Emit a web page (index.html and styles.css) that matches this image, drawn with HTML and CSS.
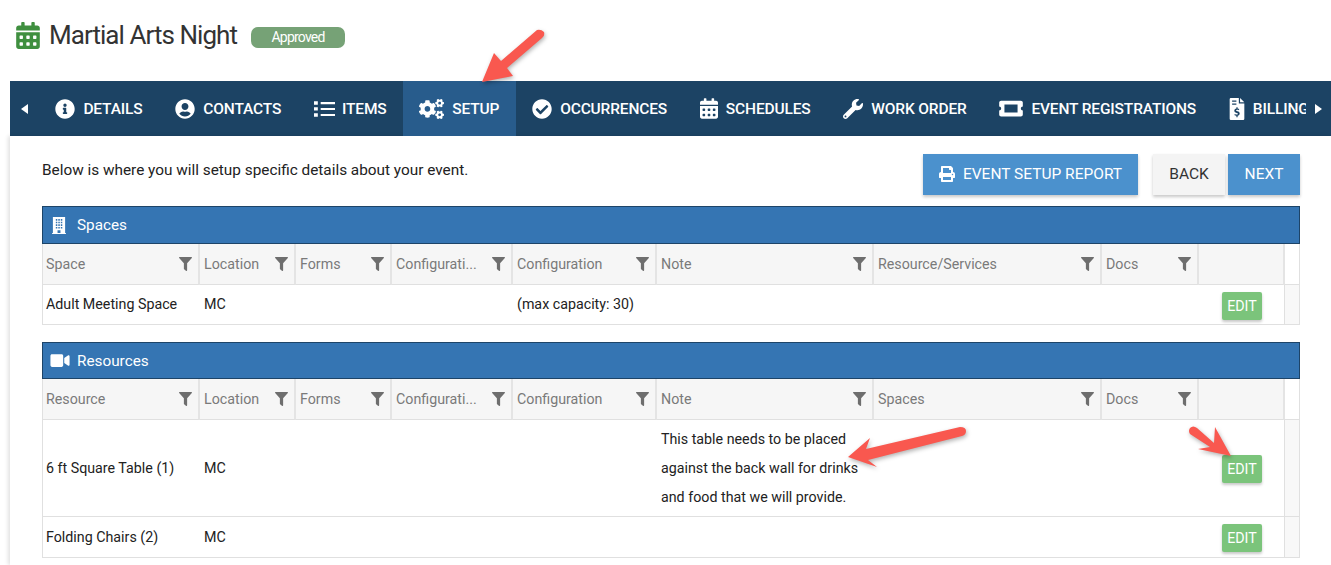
FILE: index.html
```html
<!DOCTYPE html>
<html lang="en">
<head>
<meta charset="utf-8">
<title>Martial Arts Night</title>
<link rel="stylesheet" href="styles.css">
</head>
<body>
<svg width="0" height="0" class="defs">
  <symbol id="i-filter" viewBox="0 0 512 512" preserveAspectRatio="none"><path d="M487.976 0H24.028C2.710 0-8.047 25.866 7.058 40.971L192 225.941V432c0 7.831 3.821 15.170 10.237 19.662l80 55.980C298.020 518.690 320 507.493 320 487.980V225.941l184.947-184.970C520.021 25.896 509.338 0 487.976 0z"/></symbol>
  <symbol id="i-cal" viewBox="0 0 448 512"><path d="M0 464c0 26.500 21.500 48 48 48h352c26.500 0 48-21.500 48-48V192H0v272zm320-196c0-6.600 5.400-12 12-12h40c6.600 0 12 5.400 12 12v40c0 6.600-5.400 12-12 12h-40c-6.600 0-12-5.400-12-12v-40zm0 128c0-6.600 5.400-12 12-12h40c6.600 0 12 5.400 12 12v40c0 6.600-5.400 12-12 12h-40c-6.600 0-12-5.400-12-12v-40zM192 268c0-6.600 5.400-12 12-12h40c6.600 0 12 5.400 12 12v40c0 6.600-5.400 12-12 12h-40c-6.600 0-12-5.400-12-12v-40zm0 128c0-6.600 5.400-12 12-12h40c6.600 0 12 5.400 12 12v40c0 6.600-5.400 12-12 12h-40c-6.600 0-12-5.400-12-12v-40zM64 268c0-6.600 5.400-12 12-12h40c6.600 0 12 5.400 12 12v40c0 6.600-5.400 12-12 12H76c-6.600 0-12-5.400-12-12v-40zm0 128c0-6.600 5.400-12 12-12h40c6.600 0 12 5.400 12 12v40c0 6.600-5.400 12-12 12H76c-6.600 0-12-5.400-12-12v-40zM400 64h-48V16c0-8.800-7.200-16-16-16h-32c-8.800 0-16 7.200-16 16v48H160V16c0-8.800-7.200-16-16-16h-32c-8.800 0-16 7.200-16 16v48H48C21.500 64 0 85.500 0 112v48h448v-48c0-26.500-21.500-48-48-48z"/></symbol>
</svg>

<header class="page-head">
  <svg class="title-icon"><use href="#i-cal"/></svg>
  <h1 class="title">Martial Arts Night</h1>
  <span class="badge">Approved</span>
</header>

<nav class="tabbar">
  <span class="scroll-arrow"><i class="tri tri-left"></i></span>
  <div class="tabs">
    <a class="tab">
      <svg class="tab-icon" viewBox="0 0 512 512"><path d="M256 8C119.043 8 8 119.083 8 256c0 136.997 111.043 248 248 248s248-111.003 248-248C504 119.083 392.957 8 256 8zm0 110c23.196 0 42 18.804 42 42s-18.804 42-42 42-42-18.804-42-42 18.804-42 42-42zm56 254c0 6.627-5.373 12-12 12h-88c-6.627 0-12-5.373-12-12v-24c0-6.627 5.373-12 12-12h12v-64h-12c-6.627 0-12-5.373-12-12v-24c0-6.627 5.373-12 12-12h64c6.627 0 12 5.373 12 12v100h12c6.627 0 12 5.373 12 12v24z"/></svg>
      DETAILS</a>
    <a class="tab">
      <svg class="tab-icon" viewBox="0 0 496 512"><path d="M248 8C111 8 0 119 0 256s111 248 248 248 248-111 248-248S385 8 248 8zm0 96c48.600 0 88 39.400 88 88s-39.400 88-88 88-88-39.400-88-88 39.400-88 88-88zm0 344c-58.700 0-111.300-26.600-146.500-68.200 18.800-35.400 55.600-59.800 98.500-59.800 2.400 0 4.800.4 7.100 1.100 13 4.200 26.600 6.900 40.900 6.900 14.300 0 28-2.700 40.900-6.900 2.300-.7 4.700-1.100 7.100-1.100 42.900 0 79.700 24.400 98.500 59.800C359.300 421.400 306.700 448 248 448z"/></svg>
      CONTACTS</a>
    <a class="tab">
      <svg class="tab-icon tab-icon-list" viewBox="0 0 22 18"><path d="M0 1h4v3.500H0zM0 7.200h4v3.500H0zM0 13.500h4V17H0zM7 1.700h15v2.200H7zM7 7.900h15v2.200H7zM7 14.200h15v2.200H7z"/></svg>
      ITEMS</a>
    <a class="tab tab-active">
      <svg class="tab-icon tab-icon-cogs" viewBox="0 0 640 512"><path d="M512.100 191l-8.200 14.300c-3 5.300-9.400 7.500-15.100 5.400-11.800-4.400-22.600-10.700-32.100-18.600-4.600-3.800-5.800-10.500-2.800-15.700l8.200-14.300c-6.900-8-12.300-17.300-15.900-27.400h-16.500c-6 0-11.200-4.300-12.200-10.300-2-12-2.100-24.600 0-37.100 1-6 6.200-10.400 12.200-10.400h16.500c3.600-10.100 9-19.400 15.900-27.400l-8.200-14.300c-3-5.200-1.900-11.900 2.800-15.700 9.500-7.900 20.400-14.200 32.100-18.600 5.700-2.100 12.100.1 15.100 5.400l8.200 14.300c10.500-1.900 21.200-1.900 31.700 0L552 6.300c3-5.300 9.400-7.500 15.100-5.400 11.800 4.400 22.600 10.700 32.100 18.600 4.600 3.800 5.800 10.500 2.800 15.700l-8.200 14.300c6.900 8 12.300 17.300 15.900 27.400h16.500c6 0 11.200 4.300 12.200 10.300 2 12 2.100 24.600 0 37.100-1 6-6.200 10.400-12.200 10.400h-16.500c-3.600 10.100-9 19.400-15.900 27.400l8.200 14.300c3 5.200 1.900 11.900-2.800 15.700-9.500 7.900-20.400 14.200-32.100 18.600-5.700 2.100-12.100-.1-15.100-5.400l-8.200-14.300c-10.400 1.900-21.200 1.900-31.700 0zm-10.500-58.800c38.500 29.600 82.400-14.300 52.800-52.800-38.500-29.700-82.400 14.300-52.800 52.800zM386.300 286.100l33.700 16.800c10.100 5.800 14.500 18.100 10.500 29.100-8.900 24.200-26.400 46.400-42.600 65.800-7.400 8.900-20.200 11.100-30.300 5.300l-29.100-16.800c-16 13.700-34.600 24.600-54.900 31.700v33.600c0 11.600-8.300 21.600-19.700 23.600-24.600 4.200-50.400 4.400-75.900 0-11.500-2-20-11.900-20-23.600V418c-20.300-7.200-38.900-18-54.900-31.700L74 403c-10 5.800-22.900 3.600-30.300-5.300-16.200-19.400-33.300-41.600-42.200-65.700-4-10.900.4-23.200 10.500-29.100l33.300-16.800c-3.900-20.900-3.900-42.400 0-63.400L12 205.800c-10.100-5.800-14.600-18.100-10.500-29 8.900-24.200 26-46.400 42.200-65.800 7.400-8.900 20.200-11.100 30.300-5.300l29.100 16.800c16-13.700 34.600-24.600 54.900-31.700V57.100c0-11.500 8.200-21.500 19.600-23.500 24.600-4.200 50.500-4.400 76-.1 11.500 2 20 11.900 20 23.600v33.600c20.300 7.200 38.900 18 54.900 31.700l29.100-16.800c10-5.800 22.900-3.600 30.300 5.300 16.200 19.400 33.200 41.600 42.100 65.800 4 10.900.1 23.200-10 29.100l-33.700 16.800c3.900 21 3.900 42.500 0 63.500zm-117.600 21.100c59.200-77-28.700-164.900-105.700-105.700-59.200 77 28.700 164.900 105.700 105.700zm243.400 182.700l-8.200 14.300c-3 5.300-9.400 7.500-15.100 5.400-11.800-4.400-22.600-10.700-32.100-18.600-4.600-3.800-5.800-10.500-2.800-15.700l8.200-14.300c-6.900-8-12.300-17.300-15.900-27.400h-16.500c-6 0-11.200-4.300-12.200-10.300-2-12-2.100-24.600 0-37.100 1-6 6.200-10.400 12.200-10.400h16.500c3.600-10.100 9-19.400 15.900-27.400l-8.200-14.300c-3-5.200-1.900-11.900 2.800-15.700 9.500-7.900 20.400-14.200 32.100-18.600 5.700-2.100 12.100.1 15.100 5.400l8.200 14.300c10.500-1.900 21.200-1.900 31.700 0l8.200-14.300c3-5.300 9.400-7.500 15.100-5.400 11.800 4.400 22.600 10.700 32.100 18.600 4.600 3.800 5.800 10.500 2.800 15.700l-8.200 14.300c6.900 8 12.300 17.300 15.900 27.400h16.500c6 0 11.200 4.300 12.200 10.300 2 12 2.100 24.600 0 37.100-1 6-6.200 10.400-12.200 10.400h-16.500c-3.600 10.100-9 19.400-15.900 27.400l8.200 14.300c3 5.200 1.900 11.900-2.800 15.700-9.500 7.900-20.400 14.200-32.100 18.600-5.700 2.100-12.100-.1-15.100-5.400l-8.200-14.300c-10.400 1.900-21.200 1.900-31.700 0zM501.600 431c38.500 29.600 82.400-14.300 52.800-52.800-38.500-29.600-82.400 14.300-52.800 52.800z"/></svg>
      SETUP</a>
    <a class="tab">
      <svg class="tab-icon" viewBox="0 0 512 512"><path d="M504 256c0 136.967-111.033 248-248 248S8 392.967 8 256 119.033 8 256 8s248 111.033 248 248zM227.314 387.314l184-184c6.248-6.248 6.248-16.379 0-22.627l-22.627-22.627c-6.248-6.249-16.379-6.249-22.628 0L216 308.118l-70.059-70.059c-6.248-6.248-16.379-6.248-22.628 0l-22.627 22.627c-6.248 6.248-6.248 16.379 0 22.627l104 104c6.249 6.249 16.379 6.249 22.628.001z"/></svg>
      OCCURRENCES</a>
    <a class="tab">
      <svg class="tab-icon tab-icon-cal"><use href="#i-cal"/></svg>
      SCHEDULES</a>
    <a class="tab">
      <svg class="tab-icon" viewBox="0 0 512 512"><path d="M507.730 109.100c-2.240-9.030-13.540-12.090-20.120-5.510l-74.360 74.360-67.880-11.310-11.310-67.880 74.360-74.360c6.620-6.620 3.430-17.900-5.660-20.160-47.380-11.740-99.550.910-136.580 37.930-39.640 39.640-50.550 97.100-34.050 147.200L18.740 402.760c-24.990 24.990-24.990 65.510 0 90.500 24.990 24.990 65.510 24.990 90.500 0l213.210-213.210c50.120 16.710 107.470 5.680 147.370-34.220 37.070-37.070 49.700-89.320 37.910-136.730zM64 472c-13.250 0-24-10.750-24-24 0-13.260 10.750-24 24-24s24 10.740 24 24c0 13.250-10.750 24-24 24z"/></svg>
      WORK ORDER</a>
    <a class="tab">
      <svg class="tab-icon tab-icon-ticket" viewBox="0 0 576 512"><path fill-rule="evenodd" d="M528 256c0 26.510 21.490 48 48 48v96c0 26.510-21.490 48-48 48H48c-26.510 0-48-21.490-48-48v-96c26.510 0 48-21.490 48-48s-21.490-48-48-48v-96c0-26.510 21.490-48 48-48h480c26.510 0 48 21.490 48 48v96c-26.510 0-48 21.490-48 48zM128 160v192h320V160z"/></svg>
      EVENT REGISTRATIONS</a>
    <a class="tab">
      <svg class="tab-icon tab-icon-file" viewBox="0 0 12 18"><path fill-rule="evenodd" d="M1 0h6.500v4.500H12V17a1 1 0 0 1-1 1H1a1 1 0 0 1-1-1V1a1 1 0 0 1 1-1zm7.500 0L12 3.500H8.500zM2 2v1h3.500V2zm0 2.500v1h3.500v-1zM6.500 7.500h-1v1.100c-1 .2-1.700.9-1.700 1.800 0 1 .8 1.500 1.900 1.800.9.200 1.100.4 1.100.7 0 .4-.4.600-.9.600-.6 0-1.200-.2-1.600-.5l-.5 1c.4.300 1 .5 1.700.6V15.700h1v-1.200c1-.2 1.700-.9 1.700-1.900 0-1-.7-1.500-1.900-1.800-.9-.2-1.100-.4-1.100-.6 0-.3.300-.5.800-.5s1 .1 1.400.4l.5-1c-.4-.3-.9-.4-1.400-.5z"/></svg>
      BILLING</a>
  </div>
  <span class="scroll-arrow scroll-arrow-right"><i class="tri tri-right"></i></span>
</nav>

<main class="content">
  <div class="toolbar">
    <p class="intro">Below is where you will setup specific details about your event.</p>
    <div class="actions">
      <button class="btn btn-blue btn-report">
        <svg class="btn-icon" viewBox="0 0 512 512"><path d="M448 192V77.250c0-8.490-3.370-16.620-9.370-22.630L393.370 9.370c-6-6-14.140-9.370-22.630-9.370H96C78.330 0 64 14.330 64 32v160c-35.350 0-64 28.650-64 64v112c0 8.840 7.160 16 16 16h48v96c0 17.670 14.330 32 32 32h320c17.670 0 32-14.330 32-32v-96h48c8.840 0 16-7.160 16-16V256c0-35.350-28.650-64-64-64zm-64 256H128v-96h256v96zm0-224H128V64h192v48c0 8.840 7.160 16 16 16h48v96zm48 72c-13.250 0-24-10.750-24-24 0-13.270 10.750-24 24-24s24 10.730 24 24c0 13.250-10.750 24-24 24z"/></svg>
        EVENT SETUP REPORT</button>
      <button class="btn btn-grey">BACK</button>
      <button class="btn btn-blue btn-next">NEXT</button>
    </div>
  </div>

  <section class="panel panel-spaces">
    <h2 class="panel-title">
      <svg class="panel-icon panel-icon-building" viewBox="0 0 448 512"><path fill-rule="evenodd" d="M40 0h368v480h24v32H16v-32h24zM128 60v50h45V60zm75 0v50h45V60zm75 0v50h45V60zM128 140v50h45v-50zm75 0v50h45v-50zm75 0v50h45v-50zM128 220v50h45v-50zm75 0v50h45v-50zm75 0v50h45v-50zM128 300v50h45v-50zm75 0v50h45v-50zm75 0v50h45v-50zM180 400v80h88v-80z"/></svg>
      Spaces</h2>
    <div class="grid head">
      <div class="hc">Space<svg class="filter"><use href="#i-filter"/></svg></div>
      <div class="hc">Location<svg class="filter"><use href="#i-filter"/></svg></div>
      <div class="hc">Forms<svg class="filter"><use href="#i-filter"/></svg></div>
      <div class="hc">Configurati...<svg class="filter"><use href="#i-filter"/></svg></div>
      <div class="hc">Configuration<svg class="filter"><use href="#i-filter"/></svg></div>
      <div class="hc">Note<svg class="filter"><use href="#i-filter"/></svg></div>
      <div class="hc">Resource/Services<svg class="filter"><use href="#i-filter"/></svg></div>
      <div class="hc">Docs<svg class="filter"><use href="#i-filter"/></svg></div>
      <div class="hc"></div>
      <div class="hc-end"></div>
    </div>
    <div class="grid row row-first">
      <div class="c">Adult Meeting Space</div>
      <div class="c">MC</div>
      <div class="c"></div>
      <div class="c"></div>
      <div class="c">(max capacity: 30)</div>
      <div class="c"></div>
      <div class="c"></div>
      <div class="c"></div>
      <div class="c-action"><button class="edit">EDIT</button></div>
      <div class="c-end"></div>
    </div>
  </section>

  <section class="panel">
    <h2 class="panel-title panel-title-short">
      <svg class="panel-icon panel-icon-video" viewBox="0 0 576 512"><path d="M336.200 64H47.800C21.400 64 0 85.400 0 111.800v288.400C0 426.600 21.400 448 47.800 448h288.400c26.400 0 47.800-21.400 47.800-47.800V111.800c0-26.400-21.400-47.800-47.800-47.800zm189.400 37.700L416 177.300v157.400l109.600 75.500c21.200 14.600 50.400-.3 50.400-25.800V127.500c0-25.400-29.100-40.400-50.400-25.800z"/></svg>
      Resources</h2>
    <div class="grid head">
      <div class="hc">Resource<svg class="filter"><use href="#i-filter"/></svg></div>
      <div class="hc">Location<svg class="filter"><use href="#i-filter"/></svg></div>
      <div class="hc">Forms<svg class="filter"><use href="#i-filter"/></svg></div>
      <div class="hc">Configurati...<svg class="filter"><use href="#i-filter"/></svg></div>
      <div class="hc">Configuration<svg class="filter"><use href="#i-filter"/></svg></div>
      <div class="hc">Note<svg class="filter"><use href="#i-filter"/></svg></div>
      <div class="hc">Spaces<svg class="filter"><use href="#i-filter"/></svg></div>
      <div class="hc">Docs<svg class="filter"><use href="#i-filter"/></svg></div>
      <div class="hc"></div>
      <div class="hc-end"></div>
    </div>
    <div class="grid row row-tall">
      <div class="c">6 ft Square Table (1)</div>
      <div class="c">MC</div>
      <div class="c"></div>
      <div class="c"></div>
      <div class="c"></div>
      <div class="c c-note">This table needs to be placed against the back wall for drinks and food that we will provide.</div>
      <div class="c"></div>
      <div class="c"></div>
      <div class="c-action"><button class="edit">EDIT</button></div>
      <div class="c-end"></div>
    </div>
    <div class="grid row row-last">
      <div class="c">Folding Chairs (2)</div>
      <div class="c">MC</div>
      <div class="c"></div>
      <div class="c"></div>
      <div class="c"></div>
      <div class="c"></div>
      <div class="c"></div>
      <div class="c"></div>
      <div class="c-action"><button class="edit">EDIT</button></div>
      <div class="c-end"></div>
    </div>
  </section>
</main>

<svg class="callouts" viewBox="0 0 1331 565">
  <path d="M537 30Q541 29 544 32Q545 36 542 38L507 68L513 76L482 82L494 53L501 61Z"/>
  <path d="M960 427Q966 427 966 431Q966 435 962 436L868 460L877 467L848 457L870 438L866 449Z"/>
  <path d="M1190 428Q1193 425 1197 428L1214 443L1215 427L1231 456L1198 449L1210 447L1190 434Q1188 431 1190 428Z"/>
</svg>
</body>
</html>
```

FILE: styles.css
```css
* { box-sizing: border-box; }
html, body { margin: 0; padding: 0; height: 565px; overflow: hidden; }
body {
  position: relative;
  background: #fff;
  color: #222;
  font-family: Roboto, "Liberation Sans", sans-serif;
  font-size: 14px;
}
.defs { position: absolute; }

.page-head {
  height: 81px;
  padding: 0 0 11px 16px;
  display: flex;
  align-items: center;
}
.title-icon { width: 24px; height: 27px; fill: #3f8f3f; flex: none; }
.title {
  margin: 0 0 0 9px;
  font-size: 26px;
  font-weight: 400;
  letter-spacing: -0.95px;
  color: #333;
}
.badge {
  margin: 4px 0 0 14px;
  width: 94px;
  height: 21px;
  border-radius: 7px;
  background: #76a276;
  color: #fff;
  font-size: 14px;
  letter-spacing: -0.8px;
  display: flex;
  align-items: center;
  justify-content: center;
}

.tabbar {
  margin-left: 10px;
  height: 55px;
  background: #1c4364;
  display: flex;
  align-items: stretch;
  color: #fff;
}
.scroll-arrow {
  width: 29px;
  flex: none;
  display: flex;
  align-items: center;
  justify-content: center;
}
.scroll-arrow-right { width: 25px; }
.tri { width: 0; height: 0; border-style: solid; border-color: transparent; border-width: 5px 0; }
.tri-left { border-right: 7px solid #fff; }
.tri-right { border-left: 7px solid #fff; }
.tabs { display: flex; flex: 1; min-width: 0; overflow: hidden; }
.tab {
  flex: none;
  display: flex;
  align-items: center;
  gap: 8px;
  padding: 0 16.4px;
  font-size: 15.5px;
  font-weight: 500;
  letter-spacing: -0.15px;
  white-space: nowrap;
  color: #fff;
}
.tab-active { background: #285c8c; }
.tab-icon { width: 20px; height: 20px; fill: #fff; flex: none; }
.tab-icon-list { width: 21px; height: 18px; margin-right: -1px; }
.tab-icon-cogs { width: 25px; height: 20px; }
.tab-icon-cal { width: 18px; height: 21px; }
.tab-icon-ticket { width: 24px; height: 21px; }
.tab-icon-file { width: 16px; height: 22px; }

.content {
  margin-left: 10px;
  height: 429px;
  padding: 18px 31px 0 32px;
  box-shadow: -2px 0 4px rgba(0, 0, 0, 0.12);
}
.toolbar {
  display: flex;
  justify-content: space-between;
  align-items: flex-start;
  height: 52px;
}
.intro { margin: 7px 0 0; font-size: 15.35px; color: #222; }
.actions { display: flex; align-items: flex-start; }
.btn {
  height: 41px;
  padding: 0 0 1px;
  border: 0;
  border-radius: 0;
  font-family: inherit;
  font-size: 15.5px;
  font-weight: 400;
  display: flex;
  align-items: center;
  justify-content: center;
  box-shadow: 0 2px 3px rgba(0, 0, 0, 0.22);
}
.btn-blue { background: #4b91cd; color: #fff; }
.btn-grey { background: #f4f4f4; color: #333; width: 72px; margin-left: 15px; }
.btn-next { width: 72px; margin-left: 3px; }
.btn-report { width: 215px; gap: 8px; }
.btn-icon { width: 16px; height: 16px; fill: #fff; }

.panel-spaces { margin-bottom: 17px; }
.panel-title {
  margin: 0;
  height: 38px;
  padding-left: 8px;
  background: #3575b3;
  border: 1px solid #1d4468;
  display: flex;
  align-items: center;
  gap: 8px;
  color: #fff;
  font-size: 15.3px;
  font-weight: 400;
}
.panel-title-short { height: 37px; }
.panel-icon { width: 16px; height: 17px; fill: #fff; flex: none; }
.panel-icon-building { margin-right: 2px; }
.panel-icon-video { width: 20px; height: 17px; margin-left: -1px; margin-right: -1px; }

.grid {
  display: grid;
  grid-template-columns: 158px 96px 96px 121px 144px 217px 228px 97px 84px 1fr;
}
.head { height: 41px; }
.hc {
  background: #f6f6f6;
  border-right: 2px solid #e4e4e4;
  border-bottom: 1px solid #e0e0e0;
  padding: 0 6px 0 4px;
  color: #7a7a7a;
  font-size: 14.25px;
  display: flex;
  align-items: center;
  justify-content: space-between;
}
.hc:first-child { border-left: 1px solid #e0e0e0; padding-left: 3px; }
.hc:nth-child(9) { border-right: 0; }
.hc-end { border-left: 2px solid #e4e4e4; border-right: 1px solid #e0e0e0; border-bottom: 1px solid #e0e0e0; }
.filter { width: 13px; height: 14px; fill: #6e6e6e; flex: none; }

.row { height: 40px; border-bottom: 1px solid #e0e0e0; }
.row-tall { height: 97px; }
.row-last { height: 41px; }
.c {
  padding: 0 4px;
  display: flex;
  align-items: center;
  color: #222;
  font-size: 14.25px;
}
.c:first-child { border-left: 1px solid #e0e0e0; padding-left: 3px; }
.row-first .c { padding-bottom: 2px; }
.c-note { line-height: 29px; }
.c-action { padding-left: 23px; display: flex; align-items: center; }
.c-end { background: #f8f8f8; border-left: 1px solid #e0e0e0; border-right: 1px solid #e0e0e0; margin-left: 1px; }
.edit {
  width: 40px;
  height: 28px;
  margin-top: 2px;
  padding: 0;
  border: 0;
  border-radius: 2px;
  background: #7bc47b;
  color: #fff;
  font-family: inherit;
  font-size: 14.25px;
  box-shadow: 0 2px 3px rgba(0, 0, 0, 0.22);
}

.callouts {
  position: absolute;
  left: 0;
  top: 0;
  width: 1331px;
  height: 565px;
  pointer-events: none;
  fill: #f9584f;
  filter: drop-shadow(1px 2px 2px rgba(0, 0, 0, 0.3));
}
```
